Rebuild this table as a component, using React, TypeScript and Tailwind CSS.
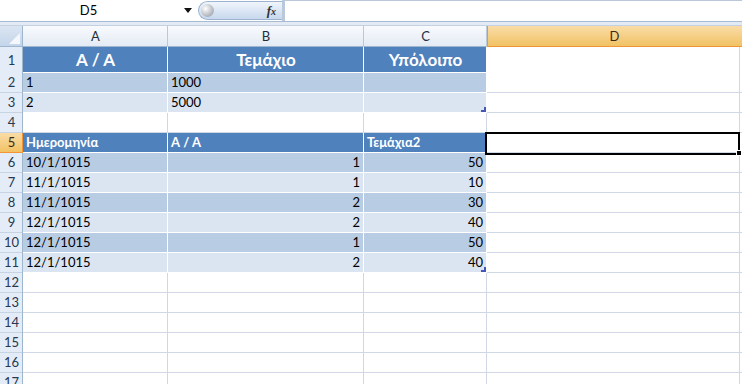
import type { ReactNode } from "react";

// row header + columns A..D, and a sliver of E at the right edge
const GRID = "grid grid-cols-[23px_145px_196px_123px_253px_1fr]";

type Band = "head" | "dark" | "light";

// grid lines are drawn as inset shadows on the right and bottom edge of each cell
const bandStyle: Record<Band, string> = {
  head: "bg-[#4f81bd] text-white font-bold shadow-[inset_-1px_-1px_0_#ffffff]",
  dark: "bg-[#b8cce4] text-black shadow-[inset_-1px_-1px_0_#ffffff]",
  light: "bg-[#dbe5f1] text-black shadow-[inset_-1px_-1px_0_#ffffff]",
};

function RowNum({ n, active }: { n: number; active?: boolean }) {
  if (active) {
    return (
      <div className="flex items-center justify-center bg-gradient-to-b from-[#f9dca6] to-[#f1c15f] text-[13px] text-[#3b2a10] shadow-[inset_-1px_-1px_0_#f29536]">
        {n}
      </div>
    );
  }
  return (
    <div className="flex items-center justify-center bg-[#e4ecf7] text-[13px] text-[#27384f] shadow-[inset_-1px_0_0_#9eb6ce,inset_0_-1px_0_#c5d3e3]">
      {n}
    </div>
  );
}

function Cell({
  band,
  right,
  children,
}: {
  band?: Band;
  right?: boolean;
  children?: ReactNode;
}) {
  const tone = band ? bandStyle[band] : "bg-white shadow-[inset_-1px_-1px_0_#d0d7e5]";
  return (
    <div
      className={`relative flex items-end overflow-hidden whitespace-nowrap pr-[4px] pl-[3px] pb-[4px] text-[13px] leading-none ${
        right ? "justify-end" : "justify-start"
      } ${tone}`}
    >
      {children}
    </div>
  );
}

// little blue corner mark a table shows at its bottom-right cell
function ResizeMark() {
  return (
    <svg className="absolute right-[1px] bottom-[1px]" width="5" height="5" viewBox="0 0 5 5">
      <path d="M3 0h2v5H0V3h3z" fill="#4456b8" />
    </svg>
  );
}

function FormulaBar() {
  return (
    <div className="flex h-[22px] border-b border-[#a7bbd3] bg-white">
      <div className="flex w-[177px] items-center justify-center text-[13px] text-black">D5</div>
      <div className="flex w-[21px] items-center justify-center">
        <svg width="8" height="5" viewBox="0 0 8 5">
          <path d="M0 0h8L4 5z" fill="#111" />
        </svg>
      </div>
      <div className="my-[1px] flex w-[84px] items-center justify-between rounded-l-full border border-r-0 border-[#9db3cf] bg-gradient-to-b from-[#f1f5fb] to-[#c7d8ee] pl-[2px] pr-[6px]">
        <span className="h-[13px] w-[13px] rounded-full bg-[radial-gradient(circle_at_35%_35%,#ffffff,#c9ccd1_45%,#8e939b)]" />
        <span className="font-['Liberation_Serif',serif] text-[13px] font-bold italic text-[#333]">
          f<span className="text-[10px]">x</span>
        </span>
      </div>
      <div className="flex-1 border-t border-l-[3px] border-[#b9c8da] bg-white" />
    </div>
  );
}

function ColumnHeader() {
  const plain =
    "flex items-center justify-center bg-gradient-to-b from-[#f8fafd] to-[#e3eaf4] text-[13px] text-[#1f2d3d] shadow-[inset_-1px_0_0_#b9c9db,inset_0_-1px_0_#9eb6ce]";
  return (
    <div className={`${GRID} h-[21px]`}>
      <div className="relative bg-gradient-to-b from-[#dbe5f2] to-[#c3d4ea] shadow-[inset_-1px_-1px_0_#9eb6ce]">
        <svg className="absolute right-[3px] bottom-[3px]" width="11" height="11" viewBox="0 0 11 11">
          <path d="M11 0v11H0z" fill="#f4f8fc" />
        </svg>
      </div>
      <div className={plain}>A</div>
      <div className={plain}>B</div>
      <div className={plain}>C</div>
      <div className="col-span-2 flex items-center justify-center bg-gradient-to-b from-[#f9dca6] to-[#f1c15f] text-[13px] text-[#3b2a10] shadow-[inset_1px_-1px_0_#f29536]">
        D
      </div>
    </div>
  );
}

const log = [
  { date: "10/1/1015", aa: 1, qty: 50 },
  { date: "11/1/1015", aa: 1, qty: 10 },
  { date: "11/1/1015", aa: 2, qty: 30 },
  { date: "12/1/1015", aa: 2, qty: 40 },
  { date: "12/1/1015", aa: 1, qty: 50 },
  { date: "12/1/1015", aa: 2, qty: 40 },
];

export default function App() {
  return (
    <div className="h-[384px] w-[742px] overflow-hidden bg-white font-['Lato',sans-serif]">
      <FormulaBar />
      <div className="h-[4px] bg-[#e3eaf3] shadow-[inset_0_-1px_0_#c3d1e2]" />
      <ColumnHeader />

      {/* row 1: stock table header */}
      <div className={`${GRID} h-[26px]`}>
        <RowNum n={1} />
        {["Α / Α", "Τεμάχιο", "Υπόλοιπο"].map((t) => (
          <div
            key={t}
            className="flex items-center justify-center bg-[#4f81bd] pb-[2px] text-[17px] font-bold text-white shadow-[inset_-1px_-3px_0_#ffffff]"
          >
            {t}
          </div>
        ))}
        <Cell />
        <Cell />
      </div>

      <div className={`${GRID} h-[20px]`}>
        <RowNum n={2} />
        <Cell band="dark">1</Cell>
        <Cell band="dark">1000</Cell>
        <Cell band="dark" />
        <Cell />
        <Cell />
      </div>
      <div className={`${GRID} h-[20px]`}>
        <RowNum n={3} />
        <Cell band="light">2</Cell>
        <Cell band="light">5000</Cell>
        <Cell band="light">
          <ResizeMark />
        </Cell>
        <Cell />
        <Cell />
      </div>
      <div className={`${GRID} h-[20px]`}>
        <RowNum n={4} />
        <Cell />
        <Cell />
        <Cell />
        <Cell />
        <Cell />
      </div>

      {/* row 5: movements table header, D5 selected */}
      <div className={`${GRID} h-[20px]`}>
        <RowNum n={5} active />
        <Cell band="head">Ημερομηνία</Cell>
        <Cell band="head">Α / Α</Cell>
        <Cell band="head">Τεμάχια2</Cell>
        <div className="relative bg-white shadow-[inset_-1px_-1px_0_#d0d7e5]">
          <div className="absolute -top-[1px] -left-[2px] z-10 h-[23px] w-[255px] border-2 border-black" />
          <div className="absolute top-[17px] left-[249px] z-20 h-[6px] w-[6px] border border-white bg-black" />
        </div>
        <Cell />
      </div>

      {log.map((r, i) => {
        const band: Band = i % 2 === 0 ? "dark" : "light";
        return (
          <div key={i} className={`${GRID} h-[20px]`}>
            <RowNum n={i + 6} />
            <Cell band={band}>{r.date}</Cell>
            <Cell band={band} right>
              {r.aa}
            </Cell>
            <Cell band={band} right>
              {r.qty}
              {i === log.length - 1 && <ResizeMark />}
            </Cell>
            <Cell />
            <Cell />
          </div>
        );
      })}

      {[12, 13, 14, 15, 16, 17].map((n) => (
        <div key={n} className={`${GRID} h-[20px]`}>
          <RowNum n={n} />
          <Cell />
          <Cell />
          <Cell />
          <Cell />
          <Cell />
        </div>
      ))}
    </div>
  );
}
